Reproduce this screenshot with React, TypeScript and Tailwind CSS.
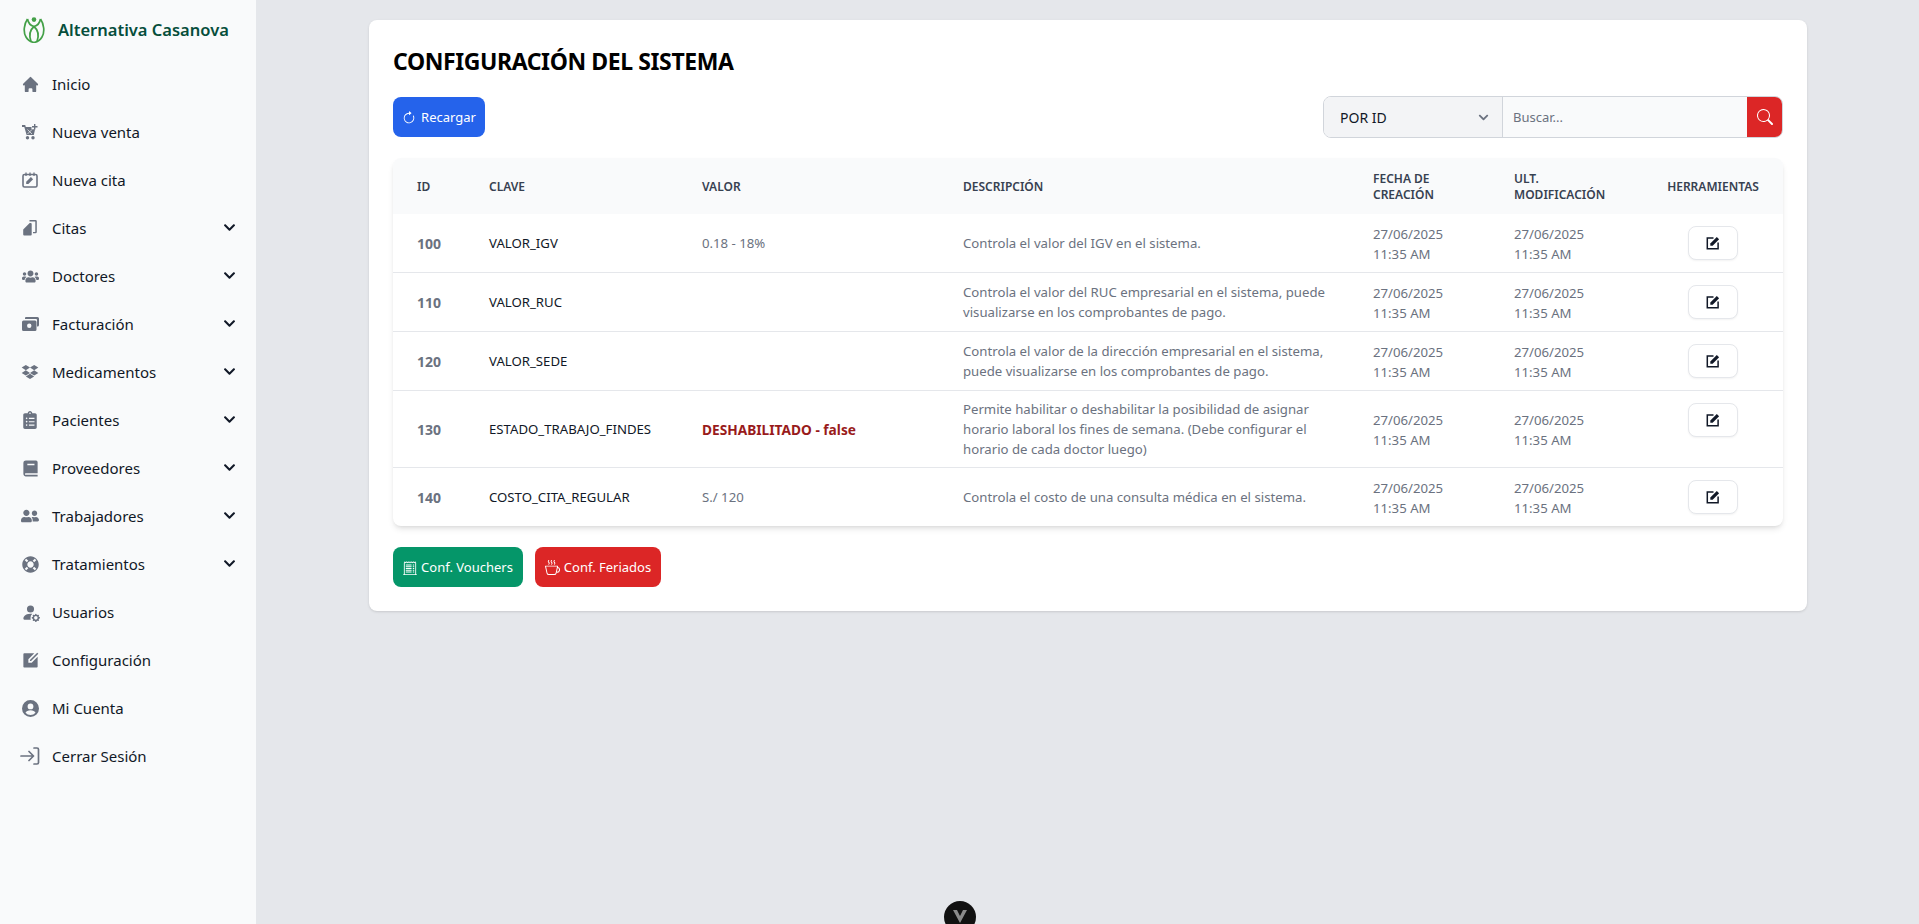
import { FaChevronDown, FaClipboardList, FaLifeRing, FaUserFriends, FaUsers } from "react-icons/fa";
import { BsArrowClockwise, BsSearch, BsCupHot, BsReceiptCutoff, BsPersonFillGear } from "react-icons/bs";
import { BiLogoDropbox, BiSolidBook } from "react-icons/bi";
import { HiHome } from "react-icons/hi";
import { RiEditBoxFill } from "react-icons/ri";
import type { ReactNode } from "react";

const font = "font-['Noto_Sans','Open_Sans',sans-serif]";

function CartIcon() {
  return (
    <svg width="16" height="16" viewBox="0 0 16 16" fill="currentColor">
      <path d="M0 1h3.200l.6 2H9.500v2.200h3.600L11.800 11H4.600L2.300 3H0z" />
      <path d="M5.500 5.500 10 10M10 5.500 5.500 10" stroke="#f9fafb" strokeWidth="0.7" />
      <path d="M12 0h1.400v2H15.500v1.400h-2.100v2H12v-2H10V2h2z" />
      <circle cx="5.500" cy="13.800" r="1.700" />
      <circle cx="11" cy="13.800" r="1.700" />
    </svg>
  );
}

function CalendarEditIcon() {
  return (
    <svg width="16" height="16" viewBox="0 0 16 16" fill="none">
      <rect x="1" y="2.500" width="14" height="12.500" rx="1.500" stroke="currentColor" strokeWidth="1.600" />
      <path d="M4 0.500v3.500M8 0.500v3.500M12 0.500v3.500" stroke="currentColor" strokeWidth="1.300" />
      <path d="M4.200 12v-2.300l4.700-4.700 2.200 2.200-4.700 4.800z" fill="currentColor" />
    </svg>
  );
}

function CopyIcon() {
  return (
    <svg width="14" height="16" viewBox="0 0 14 16" fill="currentColor">
      <path d="M3 6.500 6.500 3H7.500a1 1 0 0 1 1 1v10.500a1 1 0 0 1-1 1H1a1 1 0 0 1-1-1V9.500L3 6.500z" transform="translate(0.200 0)" />
      <path d="M6.500 0H12.500a1.300 1.300 0 0 1 1.300 1.300v10.700a1.300 1.300 0 0 1-1.300 1.300H10V12h2.300V1.500H6.500z" />
    </svg>
  );
}

function BillsIcon() {
  return (
    <svg width="17" height="14" viewBox="0 0 17 14" fill="currentColor">
      <path d="M4 0h11.500A1.500 1.500 0 0 1 17 1.500V8a1.500 1.500 0 0 1-1.500 1.500H15V3a1 1 0 0 0-1-1H3V1a1 1 0 0 1 1-1z" />
      <path fillRule="evenodd" d="M1.500 3.500h11.500A1.500 1.500 0 0 1 14.500 5v7.500A1.500 1.500 0 0 1 13 14H1.500A1.500 1.500 0 0 1 0 12.500V5a1.500 1.500 0 0 1 1.500-1.500zm5.750 3a2.200 2.200 0 1 0 0 4.400 2.200 2.200 0 0 0 0-4.400z" />
    </svg>
  );
}

function EditIcon() {
  return (
    <svg width="14" height="14" viewBox="0 0 14 14" fill="none">
      <path d="M7.500 2H1.300v10.800h10.800V6.500" stroke="currentColor" strokeWidth="1.500" />
      <path d="M4.300 9.800V7.500L10.800 1l2.300 2.300-6.500 6.500z" fill="currentColor" />
    </svg>
  );
}

function UserCircle() {
  return (
    <svg width="17" height="17" viewBox="0 0 17 17" fill="currentColor">
      <path d="M8.500 0a8.500 8.500 0 1 0 0 17 8.500 8.500 0 0 0 0-17Zm0 3.500a2.900 2.900 0 1 1 0 5.800 2.900 2.900 0 0 1 0-5.800Zm0 11.500a6.500 6.500 0 0 1-5-2.300c.6-1.500 2.600-2.400 5-2.400s4.400.9 5 2.400a6.500 6.500 0 0 1-5 2.300Z" />
    </svg>
  );
}

function Logo() {
  return (
    <svg width="22" height="26" viewBox="0 0 22 26" fill="none" stroke="#43a047" strokeWidth="1.700">
      <circle cx="11" cy="2.600" r="2.300" fill="#43a047" stroke="none" />
      <path d="M4.500 2C1 7 0 15 3 20c1.800 3 4.800 5 8 5.500 3.200-.5 6.200-2.500 8-5.500 3-5 2-13-1.500-18" />
      <path d="M4.500 2c.8 4.500 3 6.500 6.500 7.500 3.500-1 5.700-3 6.500-7.500" />
      <path d="M11 9.500c-3.500 3-5.500 8-3 15M11 9.500c3.500 3 5.500 8 3 15" />
    </svg>
  );
}

const menu: { label: string; icon: ReactNode; chevron?: boolean }[] = [
  { label: "Inicio", icon: <HiHome className="text-[19px]" /> },
  { label: "Nueva venta", icon: <CartIcon /> },
  { label: "Nueva cita", icon: <CalendarEditIcon /> },
  { label: "Citas", icon: <CopyIcon />, chevron: true },
  { label: "Doctores", icon: <FaUsers className="text-[17px]" />, chevron: true },
  { label: "Facturación", icon: <BillsIcon />, chevron: true },
  { label: "Medicamentos", icon: <BiLogoDropbox className="text-[20px]" />, chevron: true },
  { label: "Pacientes", icon: <FaClipboardList className="text-[18px]" />, chevron: true },
  { label: "Proveedores", icon: <BiSolidBook className="text-[19px]" />, chevron: true },
  { label: "Trabajadores", icon: <FaUserFriends className="text-[18px]" />, chevron: true },
  { label: "Tratamientos", icon: <FaLifeRing className="text-[17px]" />, chevron: true },
  { label: "Usuarios", icon: <BsPersonFillGear className="text-[19px]" /> },
  { label: "Configuración", icon: <RiEditBoxFill className="text-[19px]" /> },
  { label: "Mi Cuenta", icon: <UserCircle /> },
  {
    label: "Cerrar Sesión",
    icon: (
      <svg width="20" height="18" viewBox="0 0 20 18" fill="none" stroke="currentColor" strokeWidth="1.7" strokeLinecap="round" strokeLinejoin="round">
        <path d="M1 9h12M9 4.500 13.500 9 9 13.500M14 1h3a1.500 1.500 0 0 1 1.500 1.500v13A1.500 1.500 0 0 1 17 17h-3" />
      </svg>
    ),
  },
];

const rows = [
  { id: 100, key: "VALOR_IGV", val: "0.18 - 18%", desc: "Controla el valor del IGV en el sistema.", h: "h-[58px]" },
  { id: 110, key: "VALOR_RUC", val: "", desc: "Controla el valor del RUC empresarial en el sistema, puede visualizarse en los comprobantes de pago.", h: "h-[59px]" },
  { id: 120, key: "VALOR_SEDE", val: "", desc: "Controla el valor de la dirección empresarial en el sistema, puede visualizarse en los comprobantes de pago.", h: "h-[59px]" },
  { id: 130, key: "ESTADO_TRABAJO_FINDES", val: "DESHABILITADO - false", red: true, desc: "Permite habilitar o deshabilitar la posibilidad de asignar horario laboral los fines de semana. (Debe configurar el horario de cada doctor luego)", h: "h-[77px]" },
  { id: 140, key: "COSTO_CITA_REGULAR", val: "S./ 120", desc: "Controla el costo de una consulta médica en el sistema.", h: "h-[59px]" },
];

export default function App() {
  return (
    <div className={`flex h-[924px] overflow-hidden bg-[#e5e7eb] ${font}`}>
      <aside className="w-[256px] shrink-0 bg-[#f9fafb] pl-[20px] pr-[20px] pt-[15px]">
        <div className="flex h-[30px] items-center gap-[13px] pl-[3px]">
          <Logo />
          <span className="text-[16.5px] font-semibold text-[#064e3b]">Alternativa Casanova</span>
        </div>
        <nav className="mt-[15px] flex flex-col">
          {menu.map((m) => (
            <div key={m.label} className="flex h-[48px] items-center text-[15px] text-[#111827]">
              <span className="mr-[12px] flex w-[20px] shrink-0 items-center justify-center text-[#6b7280]">{m.icon}</span>
              <span className="flex-1">{m.label}</span>
              {m.chevron && <FaChevronDown className="-mt-px text-[13px] text-[#111827]" />}
            </div>
          ))}
        </nav>
      </aside>
      <main className="relative flex-1 pl-[113px] pr-[112px] pt-[20px]">
        <section className="rounded-lg bg-white p-6 shadow">
          <h1 className="mt-[1px] text-[23px] font-bold leading-8 tracking-[-0.4px] text-black">CONFIGURACIÓN DEL SISTEMA</h1>
          <div className="mt-[19px] flex items-center justify-between">
            <button className="flex h-[40px] w-[92px] items-center justify-center gap-[5px] rounded-lg bg-[#2563eb] pt-px text-[13px] text-white">
              <BsArrowClockwise className="text-[14px]" />
              Recargar
            </button>
            <div className="flex h-[42px] w-[460px] overflow-hidden rounded-lg border border-[#d1d5db]">
              <div className="flex w-[179px] items-center justify-between border-r border-[#d1d5db] bg-[#f3f4f6] pl-4 pr-[13px] text-[14px] text-[#111827]">
                POR ID
                <FaChevronDown className="text-[11px] text-[#6b7280]" />
              </div>
              <div className="flex flex-1 items-center bg-[#f9fafb] pl-[10px] pt-px text-[13px] text-[#6b7280]">Buscar...</div>
              <div className="-my-px -mr-px flex w-[36px] items-center justify-center bg-[#dc2626] text-white">
                <BsSearch className="text-[16px]" />
              </div>
            </div>
          </div>
          <div className="mt-[20px] overflow-hidden rounded-lg bg-white shadow-md">
            <table className="w-full table-fixed border-collapse text-left text-[13.2px]">
              <thead>
                <tr className="h-[56px] bg-[#f9fafb] text-[12px] font-semibold uppercase text-[#374151]">
                  <th className="w-[96px] pl-6 pt-px font-semibold">ID</th>
                  <th className="w-[213px] pt-px font-semibold">Clave</th>
                  <th className="w-[261px] pt-px font-semibold">Valor</th>
                  <th className="w-[410px] pt-px font-semibold">Descripción</th>
                  <th className="w-[141px] pt-px font-semibold leading-4">Fecha de<br />creación</th>
                  <th className="w-[141px] pt-px font-semibold leading-4">Ult.<br />modificación</th>
                  <th className="pr-[12px] pt-px text-center font-semibold">Herramientas</th>
                </tr>
              </thead>
              <tbody>
                {rows.map((r, i) => (
                  <tr key={r.id} className={`${r.h} ${i < rows.length - 1 ? "border-b border-[#e5e7eb]" : ""}`}>
                    <td className="pl-6 pt-px text-[14px] font-bold text-[#6b7280]">{r.id}</td>
                    <td className="pt-[3px] text-[#111827]">{r.key}</td>
                    <td className={r.red ? "pt-[3px] text-[13.7px] font-bold text-[#991b1b]" : "pt-[3px] text-[#6b7280]"}>{r.val}</td>
                    <td className="pr-[24px] pt-px leading-5 text-[#6b7280]">{r.desc}</td>
                    <td className="pt-[3px] leading-5 text-[#6b7280]">27/06/2025<br />11:35 AM</td>
                    <td className="pt-[3px] leading-5 text-[#6b7280]">27/06/2025<br />11:35 AM</td>
                    <td className="pr-[12px] pt-[12px] align-top">
                      <button className="mx-auto flex h-[34px] w-[50px] items-center justify-center rounded-lg border border-[#e5e7eb] bg-white text-[#111827] shadow-xs">
                        <EditIcon />
                      </button>
                    </td>
                  </tr>
                ))}
              </tbody>
            </table>
          </div>
          <div className="mt-[21px] flex gap-3">
            <button className="flex h-[40px] w-[130px] items-center justify-center gap-[4px] rounded-lg bg-[#059669] pt-px text-[13px] text-white">
              <BsReceiptCutoff className="text-[14px]" />
              Conf. Vouchers
            </button>
            <button className="flex h-[40px] w-[126px] items-center justify-center gap-[4px] rounded-lg bg-[#dc2626] pt-px text-[13px] text-white">
              <BsCupHot className="text-[15px]" />
              Conf. Feriados
            </button>
          </div>
        </section>
        <div className="absolute left-[688px] top-[901px] flex h-[32px] w-[32px] items-start justify-center rounded-full bg-[#111111] pt-[9px]">
          <svg width="14" height="13" viewBox="0 0 14 13"><path d="M0 0h4l3 6 3-6h4L7 13z" fill="#8a8a8a" /></svg>
        </div>
      </main>
    </div>
  );
}
